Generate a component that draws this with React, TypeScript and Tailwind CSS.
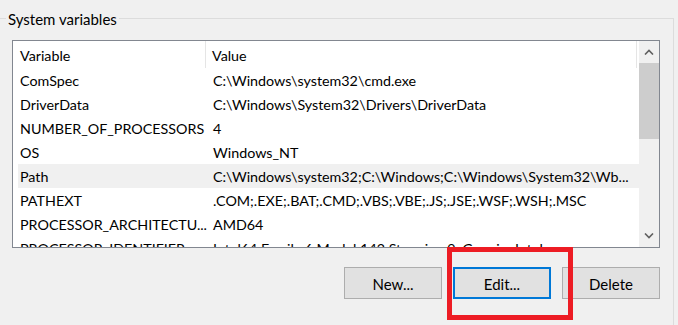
import React from "react";

const rows: { name: string; value: string; selected?: boolean }[] = [
  { name: "ComSpec", value: "C:\\Windows\\system32\\cmd.exe" },
  { name: "DriverData", value: "C:\\Windows\\System32\\Drivers\\DriverData" },
  { name: "NUMBER_OF_PROCESSORS", value: "4" },
  { name: "OS", value: "Windows_NT" },
  {
    name: "Path",
    value: "C:\\Windows\\system32;C:\\Windows;C:\\Windows\\System32\\Wb...",
    selected: true,
  },
  { name: "PATHEXT", value: ".COM;.EXE;.BAT;.CMD;.VBS;.VBE;.JS;.JSE;.WSF;.WSH;.MSC" },
  { name: "PROCESSOR_ARCHITECTU...", value: "AMD64" },
  { name: "PROCESSOR_IDENTIFIER", value: "Intel64 Family 6 Model 142 Stepping 9, GenuineIntel" },
];

function Chevron({ up }: { up?: boolean }) {
  return (
    <svg width="10" height="6" viewBox="0 0 10 6">
      <path
        d={up ? "M1 5.5 L5 1.5 L9 5.5" : "M1 0.5 L5 4.5 L9 0.5"}
        fill="none"
        stroke="#606060"
        strokeWidth="1.6"
      />
    </svg>
  );
}

export default function App() {
  return (
    <div className="relative w-[678px] h-[325px] overflow-hidden bg-[#f0f0f0] text-[14.3px] text-black font-['Lato','Liberation_Sans',sans-serif] leading-[18px]">
      <div className="relative ml-[-2px] mt-[18px] w-[676px] h-[330px] border border-[#dcdcdc] pl-[13px] pt-[21px]">
        <span className="absolute left-[7px] top-[-10px] bg-[#f0f0f0] px-[2px] leading-[20px] text-[15px]">System variables</span>
        <div className="flex w-[648px] h-[208px] border border-[#828790] bg-white overflow-hidden">
          <div className="flex-1 flex flex-col overflow-hidden">
            <div className="flex h-[27px] shrink-0 items-center">
              <div className="w-[193px] h-full flex items-center pl-[7px] pt-[3px] border-r border-[#e5e5e5]">Variable</div>
              <div className="flex-1 h-full flex items-center pl-[6px] pt-[3px] border-r border-[#e5e5e5]">Value</div>
              <div className="w-[2px]" />
            </div>
            {rows.map((r) => (
              <div
                key={r.name}
                className={`flex h-[24px] shrink-0 items-center pt-[2px] ml-[5px] whitespace-nowrap ${r.selected ? "bg-[#f0f0f0]" : ""}`}
              >
                <div className="w-[189px] pl-[2px] overflow-hidden">{r.name}</div>
                <div className="flex-1 pl-[6px] overflow-hidden">{r.value}</div>
              </div>
            ))}
          </div>
          <div className="w-[20px] shrink-0 flex flex-col bg-[#f0f0f0]">
            <div className="h-[22px] flex items-center justify-center">
              <Chevron up />
            </div>
            <div className="h-[76px] bg-[#cdcdcd]" />
            <div className="flex-1" />
            <div className="h-[22px] flex items-center justify-center">
              <Chevron />
            </div>
          </div>
        </div>
        <div className="flex justify-end gap-[11px] mt-[19px] w-[648px]">
          <button className="w-[98px] h-[32px] bg-[#e1e1e1] border border-[#adadad] flex items-center justify-center pt-[1px] text-[15px]">New...</button>
          <button className="w-[98px] h-[32px] bg-[#e1e1e1] border-2 border-[#0078d7] flex items-center justify-center pt-[1px] text-[15px]">Edit...</button>
          <button className="w-[98px] h-[32px] bg-[#e1e1e1] border border-[#adadad] flex items-center justify-center pt-[1px] text-[15px]">Delete</button>
        </div>
      </div>
      <div className="absolute left-[447px] top-[247px] w-[126px] h-[73px] border-[5px] border-[#ed1c24]" />
    </div>
  );
}
